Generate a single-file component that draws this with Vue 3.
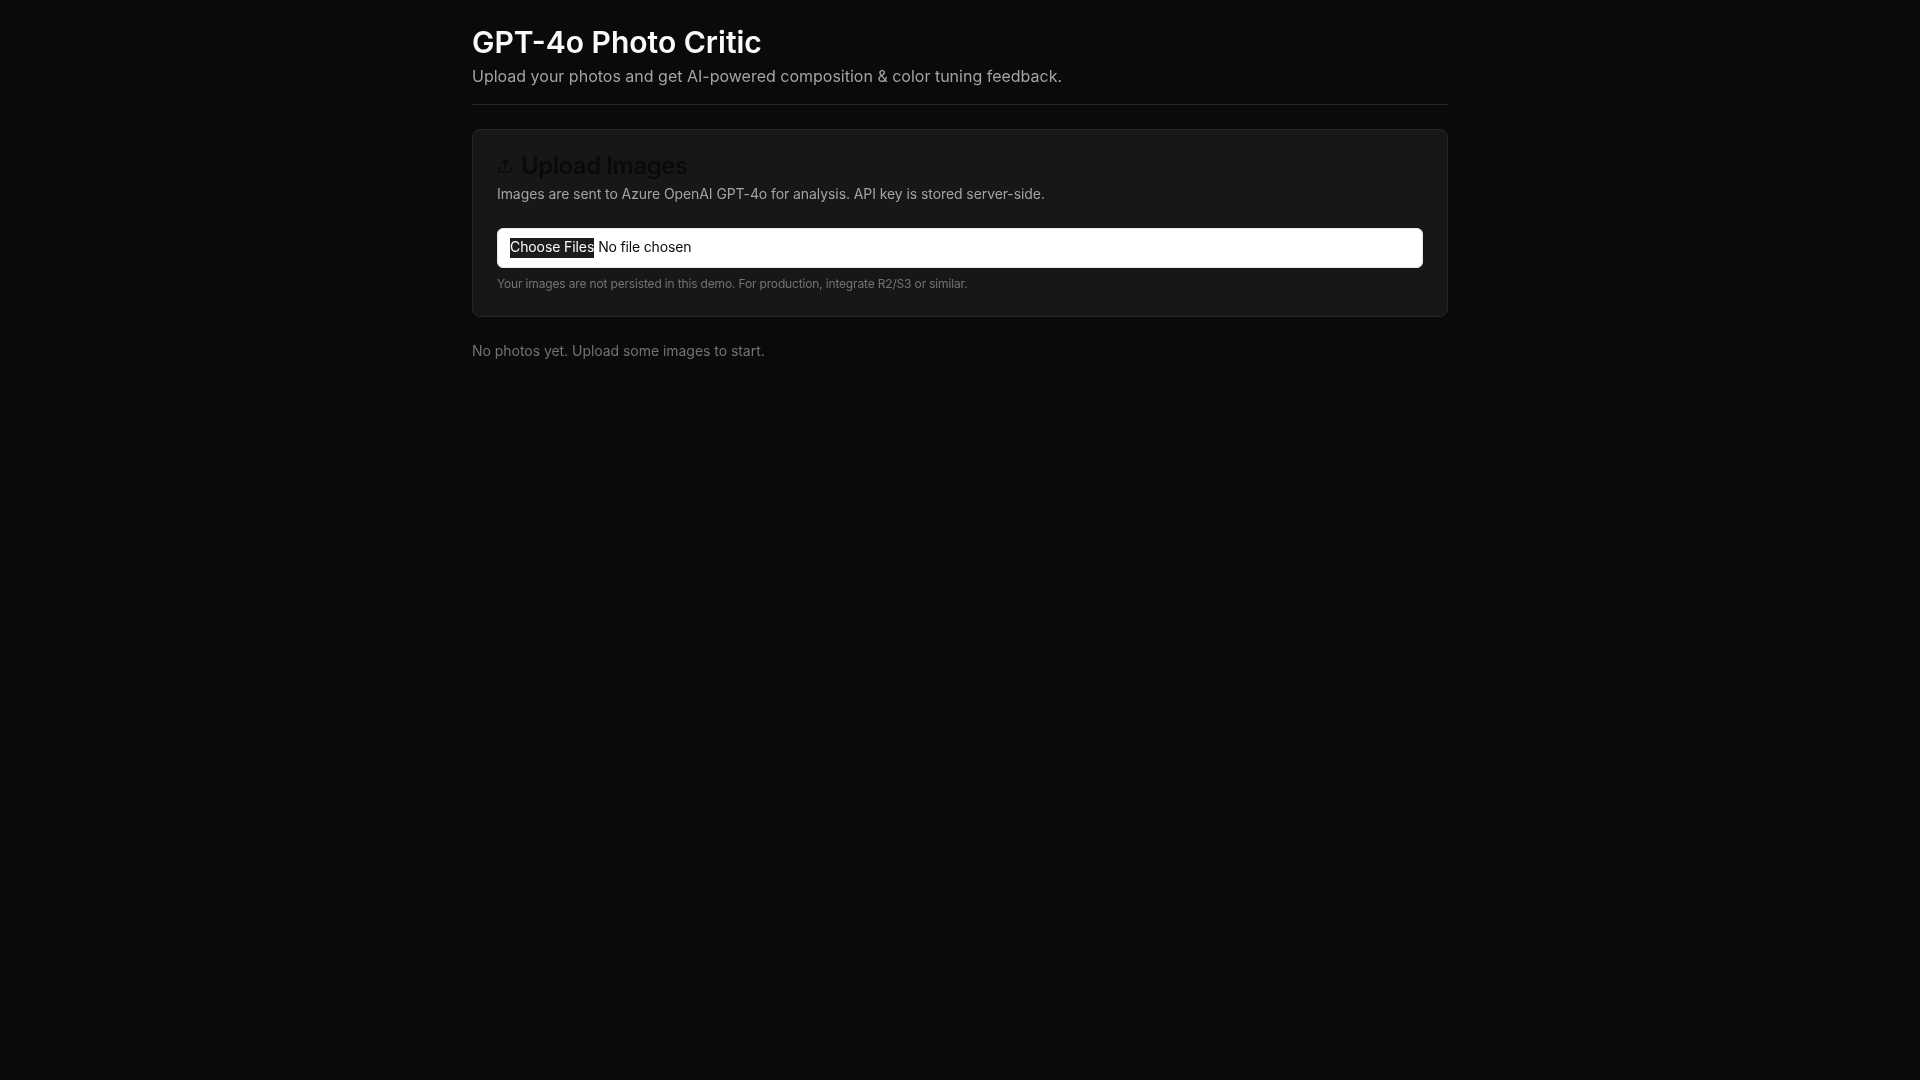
<script setup>
</script>

<template>
  <div class="page">
    <header class="header">
      <h1 class="header__title">GPT-4o Photo Critic</h1>
      <p class="header__sub">Upload your photos and get AI-powered composition &amp; color tuning feedback.</p>
    </header>

    <main class="main">
      <section class="card">
        <div class="card__head">
          <h3 class="card__title">
            <svg class="card__icon" viewBox="0 0 24 24" fill="none" stroke="currentColor" stroke-width="2" stroke-linecap="round" stroke-linejoin="round">
              <path d="M21 15v4a2 2 0 0 1-2 2H5a2 2 0 0 1-2-2v-4" />
              <polyline points="17 8 12 3 7 8" />
              <line x1="12" y1="3" x2="12" y2="15" />
            </svg>
            Upload Images
          </h3>
          <p class="card__desc">Images are sent to Azure OpenAI GPT-4o for analysis. API key is stored server-side.</p>
        </div>
        <div class="card__body">
          <input class="file" type="file" accept="image/*" multiple />
          <p class="card__note">Your images are not persisted in this demo. For production, integrate R2/S3 or similar.</p>
        </div>
      </section>

      <p class="empty">No photos yet. Upload some images to start.</p>
    </main>
  </div>
</template>

<style>
html, body {
  background: #0a0a0a;
}
</style>

<style scoped>
.page {
  min-height: 100vh;
  max-width: 1024px;
  box-sizing: border-box;
  margin: 0 auto;
  padding: 24px;
  font-family: Inter, "Liberation Sans", sans-serif;
  color: #fafafa;
  will-change: transform;
}

.header {
  padding-bottom: 16px;
  border-bottom: 1px solid #262626;
}

.header__title {
  margin: 0;
  font-size: 30px;
  line-height: 36px;
  font-weight: 600;
  color: #fafafa;
}

.header__sub {
  margin: 4px 0 0;
  font-size: 16px;
  line-height: 24px;
  color: #a3a3a3;
}

.main {
  padding-top: 24px;
  display: flex;
  flex-direction: column;
  gap: 24px;
}

.card {
  background: #171717;
  border: 1px solid #262626;
  border-radius: 8px;
}

.card__head {
  padding: 24px 24px 0;
}

.card__title {
  display: flex;
  align-items: center;
  gap: 8px;
  margin: 0;
  font-size: 24px;
  line-height: 24px;
  font-weight: 600;
  letter-spacing: -0.02em;
  color: #0a0a0a;
}

.card__icon {
  width: 16px;
  height: 16px;
}

.card__desc {
  margin: 6px 0 0;
  font-size: 14px;
  line-height: 20px;
  letter-spacing: -0.08px;
  color: #a3a3a3;
}

.card__body {
  padding: 24px;
}

.file {
  display: block;
  width: 100%;
  height: 40px;
  box-sizing: border-box;
  padding: 8px 12px;
  background: #fff;
  border: 1px solid #e5e5e5;
  border-radius: 6px;
  font-family: inherit;
  font-size: 14px;
  line-height: 20px;
  letter-spacing: -0.17px;
  color: #0a0a0a;
}

.file::file-selector-button {
  height: 20px;
  margin-right: 4px;
  padding: 0 0 2px;
  border: 0;
  background: #1c1c1c;
  color: #fafafa;
  font-family: inherit;
  font-size: 14px;
  font-weight: 400;
  letter-spacing: -0.1px;
}

.card__note {
  margin: 8px 0 0;
  font-size: 12px;
  line-height: 16px;
  letter-spacing: -0.16px;
  color: #737373;
}

.empty {
  margin: 0;
  font-size: 14px;
  line-height: 20px;
  letter-spacing: -0.04px;
  color: #737373;
}
</style>
